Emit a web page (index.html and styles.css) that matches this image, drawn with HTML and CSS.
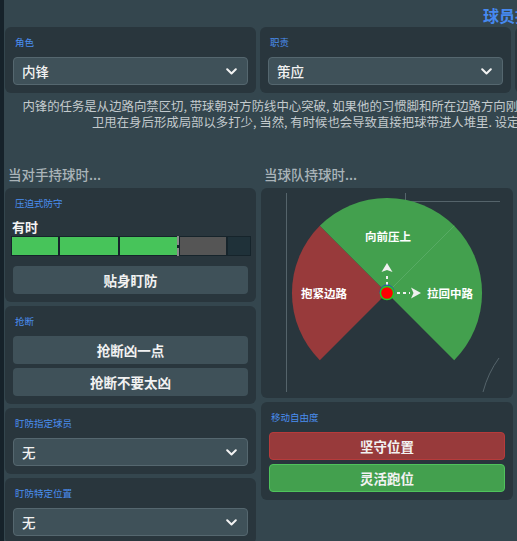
FILE: index.html
```html
<!DOCTYPE html>
<html lang="zh-CN">
<head>
  <meta charset="UTF-8" />
  <meta name="viewport" content="width=device-width, initial-scale=1.0" />
  <title>球员指示</title>
  <link rel="stylesheet" href="styles.css">
</head>
<body>
  <div class="page">
    <h1 class="page-title">球员指示</h1>

    <div class="top-row">
      <div class="card">
        <div class="card-label">角色</div>
        <div class="select">
          <span>内锋</span>
          <svg class="chevron" width="11" height="7" viewBox="0 0 11 7"><path d="M1.2 1.2L5.5 5.5L9.8 1.2"/></svg>
        </div>
      </div>
      <div class="card">
        <div class="card-label">职责</div>
        <div class="select">
          <span>策应</span>
          <svg class="chevron" width="11" height="7" viewBox="0 0 11 7"><path d="M1.2 1.2L5.5 5.5L9.8 1.2"/></svg>
        </div>
      </div>
      <div class="card">
        <div class="card-label">位置</div>
        <div class="select">
          <span>左边锋</span>
          <svg class="chevron" width="11" height="7" viewBox="0 0 11 7"><path d="M1.2 1.2L5.5 5.5L9.8 1.2"/></svg>
        </div>
      </div>
      <div class="card">
        <div class="card-label">习惯脚</div>
        <div class="select">
          <span>右脚</span>
          <svg class="chevron" width="11" height="7" viewBox="0 0 11 7"><path d="M1.2 1.2L5.5 5.5L9.8 1.2"/></svg>
        </div>
      </div>
    </div>

    <p class="role-desc">
      <span>内锋的任务是从边路向禁区切, 带球朝对方防线中心突破, 如果他的习惯脚和所在边路方向刚好相反, 效果会更明显. 他可以利用速度和盘带技术在禁区前沿制造更多威胁, 或者把对方后</span>
      <span>卫甩在身后形成局部以多打少, 当然, 有时候也会导致直接把球带进人堆里. 设定这个角色后, 球员会更多地在边路拿球然后内切并积极寻找更多射门的好机会.</span>
    </p>

    <div class="columns">
      <div class="column">
        <h2 class="column-title">当对手持球时...</h2>
        <div class="stack">
          <div class="card">
            <div class="card-label">压迫式防守</div>
            <div class="meter-value">有时</div>
            <div class="meter">
              <div class="seg seg-on" style="width: 46px"></div>
              <div class="seg seg-on" style="width: 58px"></div>
              <div class="seg seg-on" style="width: 57px"></div>
              <div class="meter-mark"></div>
              <div class="seg seg-off" style="width: 46px"></div>
              <div class="seg seg-empty" style="width: 22px"></div>
            </div>
            <div class="btn btn-first">贴身盯防</div>
          </div>

          <div class="card">
            <div class="card-label">抢断</div>
            <div class="btn-list">
              <div class="btn">抢断凶一点</div>
              <div class="btn">抢断不要太凶</div>
            </div>
          </div>

          <div class="card">
            <div class="card-label">盯防指定球员</div>
            <div class="select">
              <span>无</span>
              <svg class="chevron" width="11" height="7" viewBox="0 0 11 7"><path d="M1.2 1.2L5.5 5.5L9.8 1.2"/></svg>
            </div>
          </div>

          <div class="card">
            <div class="card-label">盯防特定位置</div>
            <div class="select">
              <span>无</span>
              <svg class="chevron" width="11" height="7" viewBox="0 0 11 7"><path d="M1.2 1.2L5.5 5.5L9.8 1.2"/></svg>
            </div>
          </div>
        </div>
      </div>

      <div class="column">
        <h2 class="column-title">当球队持球时...</h2>
        <div class="stack">
          <div class="card card-pitch">
            <svg class="pitch" width="252" height="210" viewBox="0 0 252 210">
              <g class="pitch-lines">
                <path d="M25.5 5V204"/>
                <path d="M144.5 5V13.5H239"/>
                <path d="M222 204Q227 185 238 170"/>
              </g>
              <path class="zone-red" d="M126 105L58.8 37.8A95 95 0 0 0 58.8 172.2Z"/>
              <path class="zone-green" d="M126 105L58.8 37.8A95 95 0 0 1 193.2 37.8Z"/>
              <path class="zone-green" d="M126 105L193.2 37.8A95 95 0 0 1 193.2 172.2Z"/>
              <path class="zone-split" d="M126 105L193.2 37.8"/>

              <text class="zone-text" x="127" y="48">向前压上</text>
              <text class="zone-text" x="63" y="105">抱紧边路</text>
              <text class="zone-text" x="189" y="105">拉回中路</text>

              <g class="arrow">
                <path class="arrow-dash" d="M126 97V85"/>
                <path class="arrow-dash" d="M136 105H149"/>
                <path class="arrow-head" d="M126 75L131.5 84L126 82L120.5 84Z"/>
                <path class="arrow-head" d="M160 105L150 99.5L152.5 105L150 110.5Z"/>
              </g>

              <circle class="dot-back" cx="126" cy="104" r="7"/>
              <circle class="dot" cx="126" cy="105" r="6.6"/>
            </svg>
          </div>

          <div class="card">
            <div class="card-label">移动自由度</div>
            <div class="btn-list">
              <div class="btn btn-red">坚守位置</div>
              <div class="btn btn-green">灵活跑位</div>
            </div>
          </div>
        </div>
      </div>
    </div>
  </div>
</body>
</html>
```

FILE: styles.css
```css
body {
  margin: 0;
  min-height: 100vh;
  overflow: hidden;
  background-color: #34464e;
  border-left: 4px solid #16222a;
  font-family: "Noto Sans CJK SC", "Noto Sans", sans-serif;
  color: #eef1f2;
}

.page {
  width: 1020px;
  margin-left: 1px;
}

.page-title {
  margin: 0;
  padding-top: 3px;
  line-height: 24px;
  font-size: 16px;
  font-weight: bold;
  text-align: center;
  color: #4689f0;
}

.top-row {
  display: grid;
  grid-template-columns: repeat(4, 251px);
  gap: 4px;
}

.card {
  background-color: #29363d;
  border-radius: 6px;
  padding: 8px;
}

.card-label {
  padding-left: 2px;
  margin-bottom: 8px;
  font-size: 9.5px;
  line-height: 14px;
  color: #4a8ef0;
}

.select {
  display: flex;
  align-items: center;
  justify-content: space-between;
  height: 28px;
  box-sizing: border-box;
  padding: 0 10px 0 8px;
  background-color: #3f5159;
  border: 1px solid #55676f;
  border-radius: 4px;
  font-size: 13.5px;
  font-weight: 500;
  color: #f2f2f2;
}

.chevron path {
  fill: none;
  stroke: #f2f2f2;
  stroke-width: 2;
  stroke-linecap: round;
  stroke-linejoin: round;
}

.role-desc {
  margin: 5px 0 0;
  font-size: 12.4px;
  line-height: 16px;
  text-align: center;
  white-space: nowrap;
  color: #c3cacd;
}

.role-desc span {
  display: block;
}

.columns {
  display: grid;
  grid-template-columns: 251px 252px 251px 251px;
  column-gap: 5px;
  margin-top: 35px;
}

.column-title {
  margin: 0 0 5px;
  padding-left: 3px;
  font-size: 13.5px;
  line-height: 18px;
  font-weight: 500;
  color: #aab4b9;
}

.stack {
  display: flex;
  flex-direction: column;
  gap: 4px;
}

/* meter */
.meter-value {
  margin: 3px 0 0 -1px;
  font-size: 13px;
  line-height: 18px;
  font-weight: bold;
  color: #f4f4f4;
}

.meter {
  display: flex;
  gap: 2px;
  height: 20px;
  box-sizing: border-box;
  margin: 0 -3px 0 -2px;
  background-color: #16242b;
  border: 1px solid #16242b;
}

.seg {
  height: 100%;
}

.seg-on {
  background-color: #47c45a;
}

.seg-off {
  background-color: #555555;
}

.seg-empty {
  background-color: #1f3139;
}

.meter-mark {
  width: 2px;
  margin: -1px -1px -1px -2px;
  background: linear-gradient(#8a8a8a 0 45%, transparent 45% 58%, #8a8a8a 58%);
}

/* buttons */
.btn {
  display: flex;
  align-items: center;
  justify-content: center;
  height: 28px;
  box-sizing: border-box;
  background-color: #3f5159;
  border-radius: 4px;
  font-size: 13.5px;
  font-weight: bold;
  color: #f2f2f2;
}

.btn-first {
  margin-top: 10px;
}

.btn-list {
  display: flex;
  flex-direction: column;
  gap: 4px;
}

.btn-red {
  background-color: #983a3b;
  border: 1px solid #b73b3b;
}

.btn-green {
  background-color: #43a04e;
  border: 1px solid #4fc35c;
}

/* pitch */
.card-pitch {
  padding: 0;
}

.pitch {
  display: block;
}

.pitch-lines path {
  fill: none;
  stroke: #55646b;
  stroke-width: 1;
}

.zone-red {
  fill: #983a3b;
}

.zone-green {
  fill: #43a04e;
}

.zone-split {
  stroke: #6cc477;
  stroke-width: 0.6;
}

.zone-text {
  fill: #ffffff;
  font-size: 11.5px;
  font-weight: bold;
  text-anchor: middle;
  dominant-baseline: central;
}

.arrow-dash {
  fill: none;
  stroke: #f0f0f0;
  stroke-width: 2;
  stroke-dasharray: 3 3;
}

.arrow-head {
  fill: #f0f0f0;
}

.dot-back {
  fill: none;
  stroke: #2446c8;
  stroke-width: 1;
}

.dot {
  fill: #ff0000;
  stroke: #22cc22;
  stroke-width: 1.5;
}
```
